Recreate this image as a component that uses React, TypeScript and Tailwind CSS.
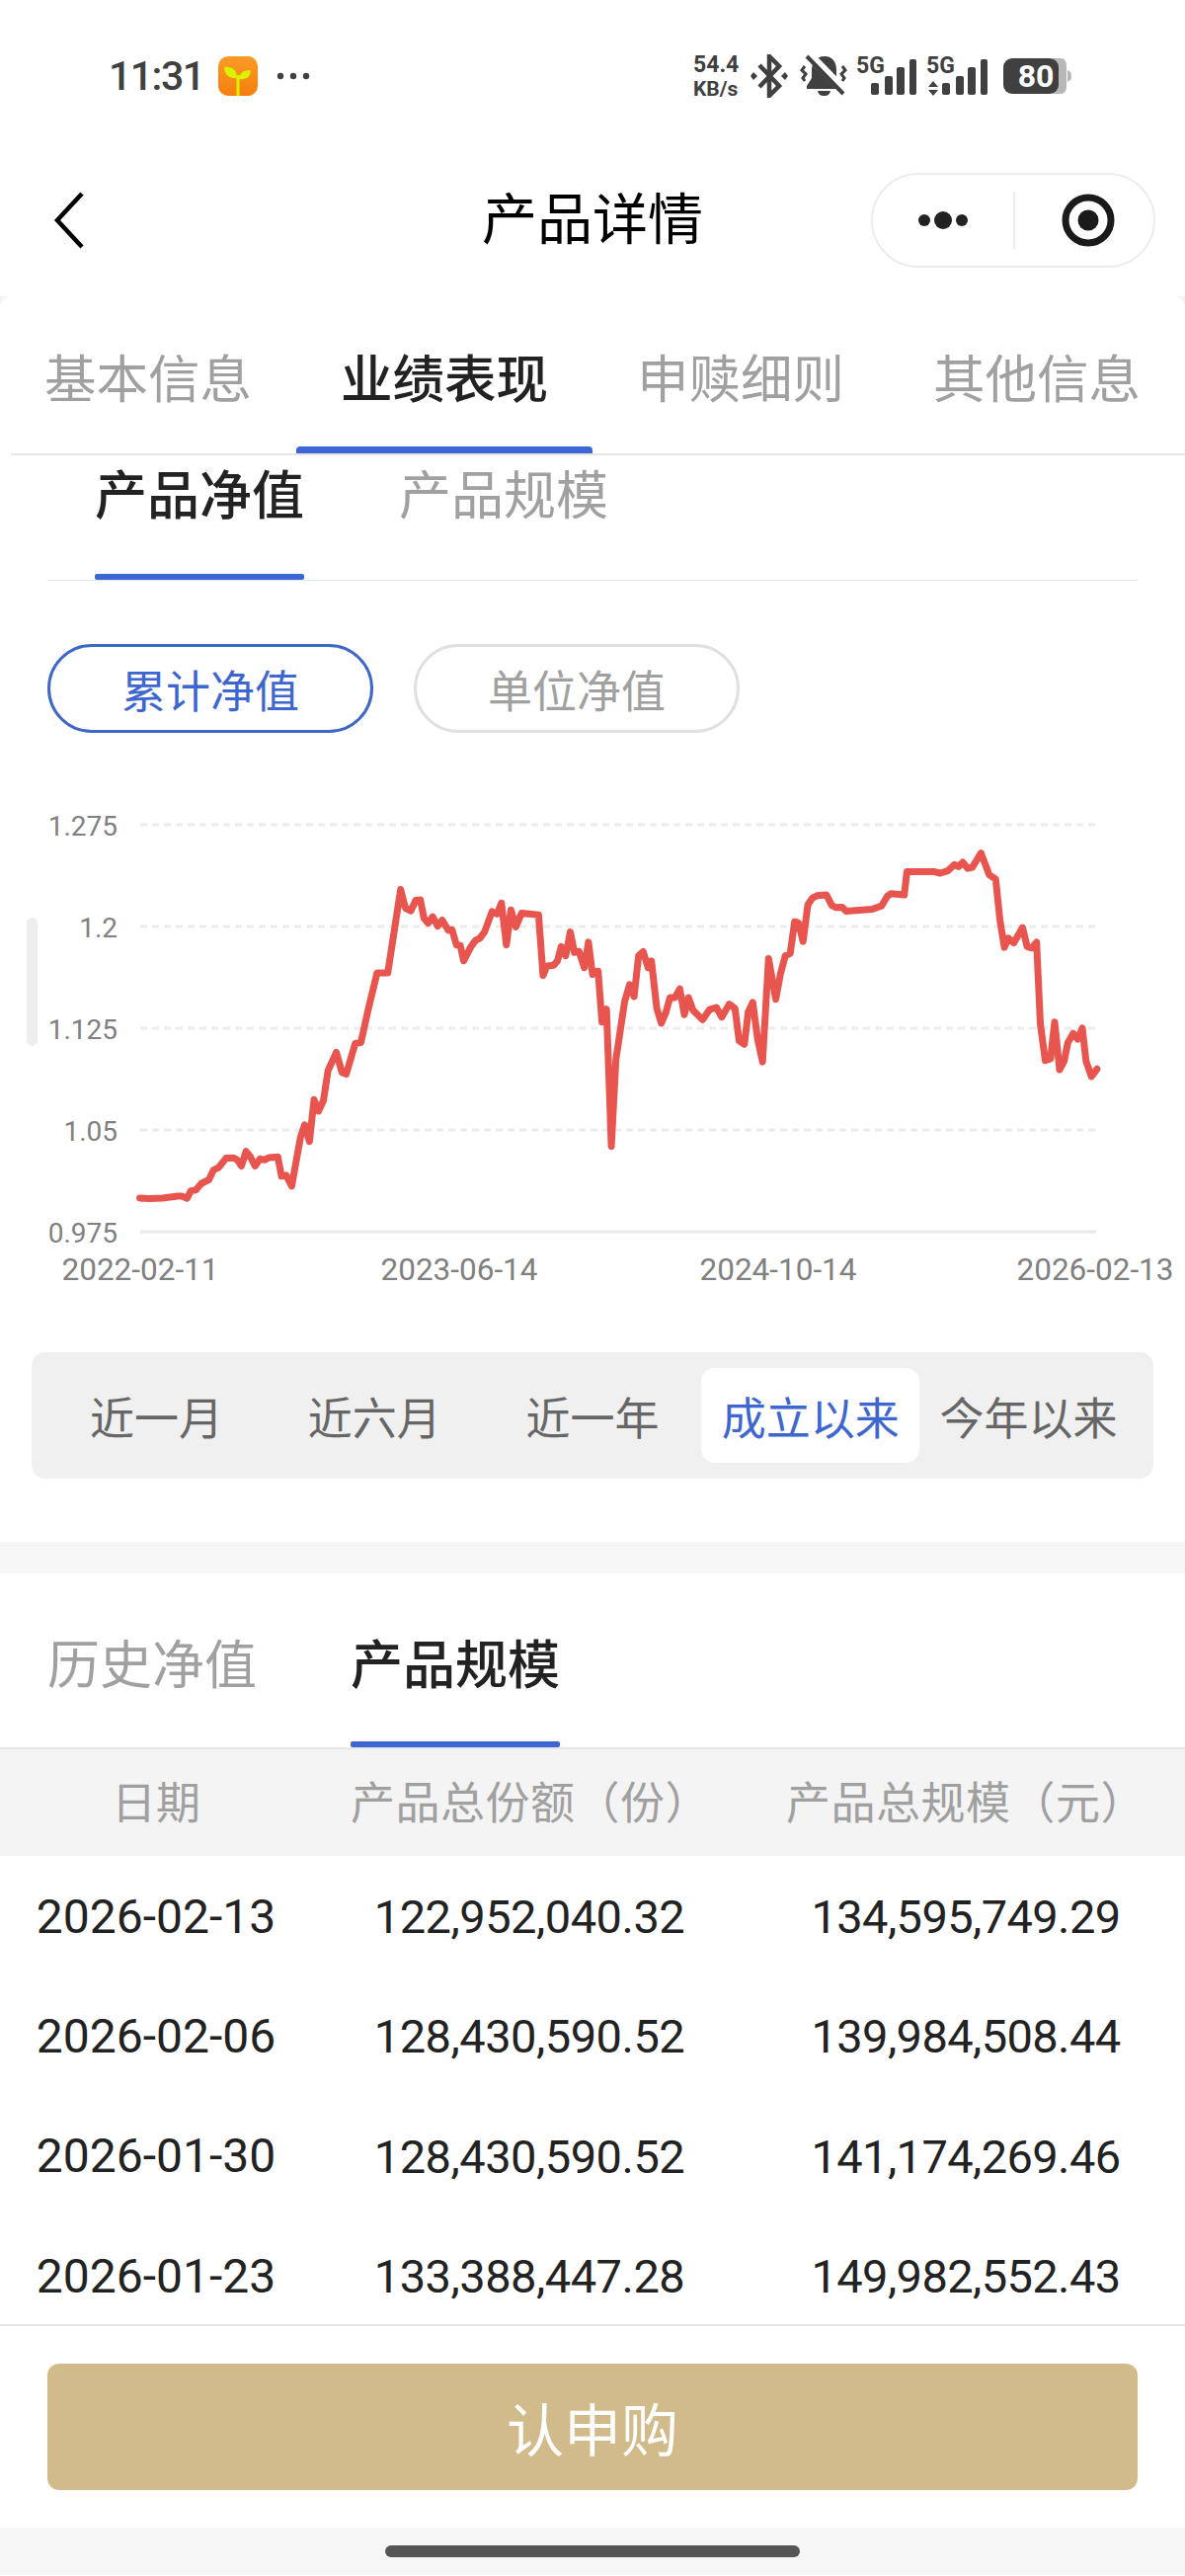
import React from 'react';

const mainTabs = ['基本信息', '业绩表现', '申赎细则', '其他信息'];
const ranges = ['近一月', '近六月', '近一年', '成立以来', '今年以来'];

const rows = [
  ['2026-02-13', '122,952,040.32', '134,595,749.29'],
  ['2026-02-06', '128,430,590.52', '139,984,508.44'],
  ['2026-01-30', '128,430,590.52', '141,174,269.46'],
  ['2026-01-23', '133,388,447.28', '149,982,552.43'],
];

// traced from the chart, left half then right half (x, y in page px)
const lineLeft = [
  [370, 1257], [395, 1259], [430, 1257], [470, 1252], [482, 1252], [495, 1258], [505, 1236], [518, 1234], [532, 1215],
  [553, 1203], [565, 1175], [578, 1168], [598, 1140], [618, 1139], [628, 1145], [639, 1163], [651, 1120], [662, 1135],
  [675, 1163], [688, 1142], [700, 1145], [712, 1138], [735, 1136], [745, 1193], [757, 1190], [772, 1222], [795, 1080],
  [806, 1042], [819, 1091], [831, 968], [843, 1002], [856, 970], [868, 882], [890, 829], [905, 888], [916, 893],
  [940, 803], [955, 800], [975, 700], [998, 595], [1026, 595], [1060, 350], [1073, 405], [1087, 413], [1100, 382],
  [1112, 380], [1122, 435], [1133, 449], [1145, 430], [1158, 458], [1170, 440], [1186, 470], [1196, 468], [1208, 513],
  [1218, 515], [1227, 560], [1245, 520], [1258, 500], [1270, 493], [1282, 475], [1302, 415], [1315, 422], [1327, 390],
  [1340, 513], [1352, 410], [1365, 460], [1380, 420], [1425, 425], [1437, 603], [1447, 575], [1465, 573], [1475, 560],
  [1485, 518], [1497, 545], [1509, 475], [1520, 535], [1532, 532], [1546, 580], [1557, 505], [1568, 600],
].map(([x, y]) => [x / 2.613, 780 + y / 2.904]);

const lineRight = [
  [5, 592], [15, 590], [25, 740], [37, 702], [50, 1105], [62, 850], [85, 680], [98, 630], [110, 665], [122, 545],
  [134, 533], [147, 580], [156, 560], [170, 700], [182, 743], [193, 715], [205, 668], [218, 668], [231, 642], [243, 718],
  [254, 668], [266, 705], [291, 733], [310, 703], [328, 697], [342, 725], [362, 687], [377, 700], [388, 795], [402, 805],
  [412, 710], [424, 682], [437, 790], [450, 857], [466, 553], [485, 673], [497, 600], [510, 545], [523, 538], [535, 445],
  [545, 448], [557, 503], [570, 395], [582, 375], [595, 368], [619, 366], [633, 397], [645, 403], [660, 402], [672, 414],
  [740, 408], [765, 398], [780, 370], [790, 362], [825, 366], [832, 298], [905, 298], [920, 302], [940, 295], [958, 277],
  [968, 283], [980, 270], [993, 288], [1005, 285], [1028, 243], [1050, 307], [1067, 320], [1078, 440], [1090, 520],
  [1100, 493], [1115, 507], [1138, 462], [1150, 518], [1162, 522], [1175, 505], [1185, 745], [1198, 853], [1212, 848],
  [1223, 740], [1236, 880], [1248, 855], [1258, 800], [1272, 773], [1284, 790], [1296, 758], [1306, 855], [1320, 900],
  [1335, 878],
].map(([x, y]) => [600 + x / 2.613, 780 + y / 2.904]);

const CHART_TOP = 790;
const linePoints = [...lineLeft, ...lineRight].map(([x, y]) => `${x.toFixed(1)},${(y - CHART_TOP).toFixed(1)}`).join(' ');

const gridY = [835, 938, 1041, 1144];
const yLabels: [string, number][] = [['1.275', 846], ['1.2', 949], ['1.125', 1052], ['1.05', 1155], ['0.975', 1258]];
const xLabels: [string, number][] = [['2022-02-11', 142], ['2023-06-14', 465], ['2024-10-14', 788], ['2026-02-13', 1109]];

const Chart = () => (
  <svg width="1200" height="530" viewBox="0 0 1200 530" className="block mt-[48px]">
    {gridY.map((y) => (
      <line key={y} x1="142" x2="1109" y1={y - CHART_TOP} y2={y - CHART_TOP} stroke="#ececec" strokeWidth="3" strokeDasharray="7 5" />
    ))}
    <line x1="142" x2="1110" y1={1247 - CHART_TOP} y2={1247 - CHART_TOP} stroke="#e8e8e8" strokeWidth="3" />
    <polyline points={linePoints} fill="none" stroke="#e8554e" strokeWidth="7" strokeLinejoin="round" strokeLinecap="round" />
    {yLabels.map(([t, y]) => (
      <text key={t} x="119" y={y - CHART_TOP} textAnchor="end" fontSize="28" fill="#808080">{t}</text>
    ))}
    {xLabels.map(([t, x]) => (
      <text key={t} x={x} y={1296 - CHART_TOP} textAnchor="middle" fontSize="31.5" fill="#808080">{t}</text>
    ))}
  </svg>
);

const Signal = ({ second }: { second?: boolean }) => (
  <svg width="64" height="50" viewBox="0 -4 64 50" className="block">
    <text x={second ? 1 : 3} y="18" fontSize="23" fontWeight="700" fill="#404040">5G</text>
    {second && <path d="M8 26l5 6H3zM3 35h10l-5 6z" fill="#404040" />}
    <rect x={second ? 17 : 18} y="28" width="8" height="12" rx="2" fill="#404040" />
    <rect x={second ? 31 : 32} y="21" width="8" height="19" rx="2" fill="#404040" />
    <rect x={second ? 43 : 44} y="12" width="8" height="28" rx="2" fill="#404040" />
    <rect x={second ? 56 : 57} y="4" width="7" height="36" rx="2" fill="#404040" />
  </svg>
);

const StatusBar = () => (
  <div className="h-[154px] flex items-center pl-[110px] pr-[114px] text-[#404040]">
    <span className="text-[41px] font-medium tracking-[-1.5px] leading-none w-[110px]">11:31</span>
    <svg width="42" height="42" viewBox="0 0 42 42" className="block">
      <defs>
        <linearGradient id="appIcon" x1="0" y1="0" x2="0" y2="1">
          <stop offset="0" stopColor="#fb9a26" />
          <stop offset="1" stopColor="#f57f0e" />
        </linearGradient>
      </defs>
      <rect x="1" y="1" width="40" height="40" rx="10" fill="url(#appIcon)" />
      <path d="M7 12c7-1 13 2 13 11-7 1-13-3-13-11z" fill="#d9f200" />
      <path d="M22 24c0-6 5-9 12-9 0 7-5 10-12 9z" fill="#d9f200" />
      <rect x="19.5" y="20" width="3" height="21" fill="#d9f200" />
    </svg>
    <svg width="36" height="8" viewBox="0 0 36 8" className="block ml-[18px]">
      <circle cx="4" cy="4" r="3.2" fill="#404040" />
      <circle cx="17" cy="4" r="3.2" fill="#404040" />
      <circle cx="30" cy="4" r="3.2" fill="#404040" />
    </svg>
    <div className="ml-auto flex items-center">
      <div className="w-[48px] font-bold">
        <div className="text-[23px] leading-[25px]">54.4</div>
        <div className="text-[21px] leading-[24px]">KB/s</div>
      </div>
      <svg width="38" height="44" viewBox="0 0 38 44" className="block ml-[10px]">
        <polyline points="9,11 29,32 19,42 19,2 29,12 9,33" fill="none" stroke="#404040" strokeWidth="4.5" />
        <path d="M3 18l4 4-4 4-3-4zM35 18l3 4-3 4-4-4z" fill="#404040" />
      </svg>
      <svg width="48" height="44" viewBox="0 0 48 44" className="block ml-[12px]">
        <path d="M25 2c-8 0-13 6-13 14v8l-5 8v3h35v-3l-5-8v-8c0-8-4-14-12-14z" fill="#404040" />
        <path d="M18 37h13c-1 4-3 5-6.500 5s-5.500-1-6.500-5z" fill="#404040" />
        <line x1="8" y1="-1" x2="44" y2="36" stroke="#fff" strokeWidth="9" />
        <line x1="7" y1="2" x2="44" y2="40" stroke="#404040" strokeWidth="4" />
        <path d="M5 12l-3 4 4 4-3 4 2 3M43 12l3 4-4 4 3 4-2 3" fill="none" stroke="#404040" strokeWidth="3" />
      </svg>
      <div className="ml-[6px]"><Signal /></div>
      <div className="ml-[9px]"><Signal second /></div>
      <svg width="70" height="36" viewBox="0 0 70 36" className="block ml-[15px]">
        <path d="M50 0h8c4 0 6 3 6 8v20c0 5-2 8-6 8h-8zM65 12c3 1 4 3 4 6s-1 5-4 6z" fill="#b8b8b8" />
        <rect x="0" y="0" width="56" height="36" rx="9" fill="#404040" />
        <text x="33" y="29" textAnchor="middle" fontSize="32" fontWeight="700" fill="#fff">80</text>
      </svg>
    </div>
  </div>
);

const NavBar = () => (
  <div className="h-[146px] grid grid-cols-[1fr_auto_1fr] pb-[8px] items-center">
    <svg width="40" height="60" viewBox="0 0 40 60" className="block ml-[50px]">
      <polyline points="33,3 8,30 33,57" fill="none" stroke="#000" strokeWidth="4.5" />
    </svg>
    <h1 className="text-[56px] text-black font-normal leading-none">产品详情</h1>
    <div className="justify-self-end mr-[30px] w-[288px] h-[96px] rounded-full border-2 border-[#ececec] flex items-center">
      <svg width="50" height="20" viewBox="0 0 50 20" className="block ml-[46px]">
        <circle cx="6" cy="10" r="6" fill="#222" />
        <circle cx="25" cy="10" r="9" fill="#222" />
        <circle cx="44" cy="10" r="6" fill="#222" />
      </svg>
      <div className="ml-[46px] w-[2px] h-[58px] bg-[#ececec]" />
      <svg width="56" height="56" viewBox="0 0 56 56" className="block ml-[46px]">
        <circle cx="28" cy="28" r="23" fill="none" stroke="#1a1a1a" strokeWidth="7" />
        <circle cx="28" cy="28" r="10.5" fill="#1a1a1a" />
      </svg>
    </div>
  </div>
);

const App = () => {
  return (
    <div className="relative w-[1200px] h-[2608px] overflow-hidden bg-white font-[family-name:Roboto,'Noto_Sans_CJK_SC',sans-serif]">
      <StatusBar />
      <NavBar />

      <div className="bg-[#f3f3f3]">
        <div className="bg-white rounded-t-[12px]">
          {/* top tabs */}
          <div className="grid grid-cols-4 h-[159px]">
            {mainTabs.map((tab, i) => (
              <div key={tab} className="relative flex items-center justify-center pt-[11px]">
                <span className={i === 1 ? 'text-[52.5px] leading-none font-medium text-[#222]' : 'text-[52.5px] leading-none text-[#a0a0a0]'}>
                  {tab}
                </span>
                {i === 1 && <div className="absolute left-0 right-0 bottom-0 h-[7px] rounded-t-[4px] bg-[#3d66d2]" />}
              </div>
            ))}
          </div>
          <div className="ml-[11px] h-[2px] bg-[#e6e6e6]" />

          {/* chart type tabs */}
          <div className="mx-[48px] h-[127px] flex border-b border-[#e6e6e6]">
            <div className="relative w-[212px] ml-[48px] pt-[14px] text-center whitespace-nowrap">
              <span className="text-[53px] leading-[56px] font-medium text-[#222]">产品净值</span>
              <div className="absolute left-0 right-0 bottom-0 h-[6px] rounded-[2px] bg-[#3d66d2]" />
            </div>
            <div className="w-[212px] ml-[96px] pt-[14px] text-center whitespace-nowrap">
              <span className="text-[53px] leading-[56px] text-[#a0a0a0]">产品规模</span>
            </div>
          </div>

          {/* value type */}
          <div className="flex mt-[64px] ml-[48px] gap-[41px]">
            <div className="w-[330px] h-[90px] pt-[8px] rounded-full border-[3px] border-[#3f68c6] flex items-center justify-center text-[45px] leading-none text-[#3d66cf]">
              累计净值
            </div>
            <div className="w-[330px] h-[90px] pt-[8px] rounded-full border-[3px] border-[#e0e0e0] flex items-center justify-center text-[45px] leading-none text-[#a0a0a0]">
              单位净值
            </div>
          </div>

          <Chart />

          {/* range switcher */}
          <div className="mx-[32px] mt-[49px] h-[128px] rounded-[14px] bg-[#f0f0f0] p-[16px] flex">
            {ranges.map((r, i) => (
              <div
                key={r}
                className={
                  i === 3
                    ? 'flex-1 pt-[9px] rounded-[14px] bg-white flex items-center justify-center text-[45px] leading-none text-[#3d66cf]'
                    : 'flex-1 pt-[9px] flex items-center justify-center text-[45px] leading-none text-[#666]'
                }
              >
                {r}
              </div>
            ))}
          </div>

          <div className="h-[64px]" />
          <div className="h-[32px] bg-[#f7f7f7]" />

          {/* history tabs */}
          <div className="h-[178px] flex border-b-2 border-[#e6e6e6]">
            <div className="w-[212px] ml-[48px] pt-[66px] text-center whitespace-nowrap">
              <span className="text-[53px] leading-[56px] text-[#a0a0a0]">历史净值</span>
            </div>
            <div className="relative w-[212px] ml-[95px] pt-[66px] text-center whitespace-nowrap">
              <span className="text-[53px] leading-[56px] font-medium text-[#222]">产品规模</span>
              <div className="absolute left-0 right-0 bottom-0 h-[6px] rounded-[2px] bg-[#3d66d2]" />
            </div>
          </div>

          {/* table */}
          <div className="grid grid-cols-[316px_440px_444px] h-[108px] pt-[3px] items-center text-center bg-[#f4f4f4] text-[45px] leading-none text-[#a0a0a0]">
            <div>日期</div>
            <div className="tracking-[0.5px] pl-[2px]">产品总份额（份）</div>
            <div className="tracking-[0.5px]">产品总规模（元）</div>
          </div>
          <div className="h-[474px] overflow-hidden">
            {rows.map((row) => (
              <div key={row[0]} className="grid grid-cols-[316px_440px_444px] h-[121.3px] pt-[2px] items-center text-center text-[47px] leading-none text-[#222]">
                <div className="text-[48px]">{row[0]}</div>
                <div className="tracking-[-0.5px]">{row[1]}</div>
                <div className="tracking-[-0.6px]">{row[2]}</div>
              </div>
            ))}
          </div>

          {/* footer */}
          <div className="border-t-2 border-[#e6e6e6] h-[206px] pt-[38px] px-[48px]">
            <div className="h-[128px] pt-[9px] rounded-[12px] bg-[#d2bb8a] flex items-center justify-center text-[58px] leading-none text-white">
              认申购
            </div>
          </div>
          <div className="h-[48px] bg-[#f7f7f7] flex justify-center pt-[18px]">
            <div className="w-[420px] h-[12px] rounded-full bg-[#555]" />
          </div>
        </div>
      </div>

      {/* page scrollbar sitting over the chart */}
      <div className="absolute left-[27px] top-[929px] w-[11px] h-[130px] rounded-full bg-[#eeeeee]" />
    </div>
  );
};

export default App;
